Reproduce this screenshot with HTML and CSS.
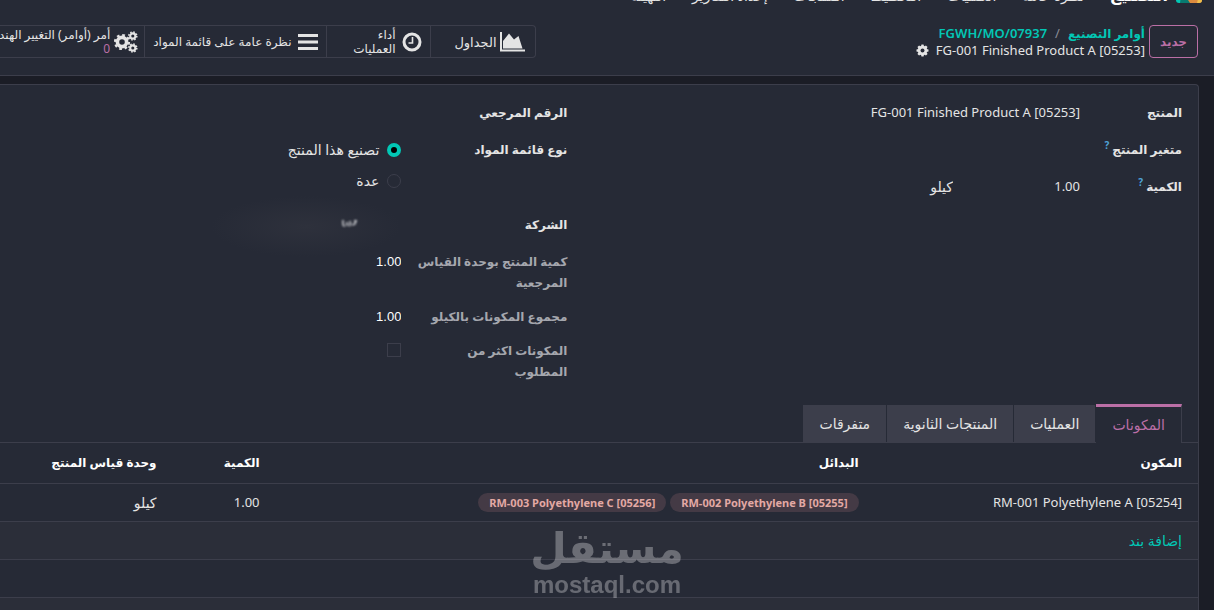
FILE: index.html
```html
<!DOCTYPE html>
<html lang="ar" dir="rtl">

<head>
    <meta charset="UTF-8">
    <meta name="viewport" content="width=device-width, initial-scale=1.0">
    <title>أوامر التصنيع</title>
    <link rel="stylesheet" href="styles.css">
</head>

<body>
    <nav class="navbar">
        <svg class="app-icon" viewBox="0 0 26 26" aria-hidden="true">
            <path d="M0 0h10l-2 26H0z" fill="#02c7b5" />
            <path d="M8 0h9v26H4z" fill="#087a70" />
            <path d="M14 26l-2-3 5-23h9v26z" fill="#dc8b3f" />
            <path d="M21 26l2-8h3v8z" fill="#f0bf4c" />
        </svg>
        <a class="brand" href="#">التصنيع</a>
        <a href="#">نظرة عامة</a>
        <a href="#">العمليات</a>
        <a href="#">التخطيط</a>
        <a href="#">المنتجات</a>
        <a href="#">إعداد التقارير</a>
        <a href="#">التهيئة</a>
    </nav>

    <header class="control-panel">
        <div class="cp-main">
            <button class="btn-new" type="button">جديد</button>
            <div class="crumbs">
                <div class="crumb-links">
                    <a class="crumb-ar" href="#">أوامر التصنيع</a>
                    <span class="slash">/</span>
                    <a href="#">FGWH/MO/07937</a>
                </div>
                <div class="crumb-current">
                    <span>[05253] FG-001 Finished Product A</span>
                    <button class="gear" type="button" aria-label="الإجراءات">
                        <svg viewBox="0 0 16 16">
                            <g fill="currentColor">
                                <circle cx="8" cy="8" r="5.9" />
                                <rect x="6.4" y="0.6" width="3.2" height="14.8" rx="0.6" />
                                <rect x="6.4" y="0.6" width="3.2" height="14.8" rx="0.6" transform="rotate(45 8 8)" />
                                <rect x="6.4" y="0.6" width="3.2" height="14.8" rx="0.6" transform="rotate(90 8 8)" />
                                <rect x="6.4" y="0.6" width="3.2" height="14.8" rx="0.6" transform="rotate(135 8 8)" />
                            </g>
                            <circle cx="8" cy="8" r="2.4" fill="#262a36" />
                        </svg>
                    </button>
                </div>
            </div>
        </div>

        <div class="stats">
            <button class="stat stat-chart" type="button">
                <svg class="icon-chart" viewBox="0 0 25 20">
                    <path d="M1 0v18.5h24" fill="none" stroke="currentColor" stroke-width="2" />
                    <path d="M3 16.500V9l6-7.500 5 6 4.500-3.500 4 12.500z" fill="currentColor" />
                </svg>
                <span>الجداول</span>
            </button>
            <button class="stat stat-narrow" type="button">
                <svg class="icon" viewBox="0 0 20 20">
                    <circle cx="10" cy="10" r="8" fill="none" stroke="currentColor" stroke-width="3" />
                    <path d="M10.500 5v6H6.500" fill="none" stroke="currentColor" stroke-width="1.600" />
                </svg>
                <span>أداء العمليات</span>
            </button>
            <button class="stat stat-list" type="button">
                <svg class="icon" viewBox="0 0 20 20">
                    <path d="M0 3.500h20M0 10h20M0 16.500h20" stroke="currentColor" stroke-width="3" />
                </svg>
                <span>نظرة عامة على قائمة المواد</span>
            </button>
            <button class="stat stat-eco" type="button">
                <svg class="icon-gears" viewBox="0 0 24 22">
                    <g fill="none" stroke="currentColor">
                        <circle cx="8" cy="11" r="4.600" stroke-width="3.600" />
                        <circle cx="8" cy="11" r="6.900" stroke-width="2.400" stroke-dasharray="2.700 2.720" />
                        <circle cx="18.800" cy="5" r="2.600" stroke-width="2.100" />
                        <circle cx="18.800" cy="5" r="4" stroke-width="1.500" stroke-dasharray="1.570 1.570" />
                        <circle cx="18.800" cy="17" r="2.600" stroke-width="2.100" />
                        <circle cx="18.800" cy="17" r="4" stroke-width="1.500" stroke-dasharray="1.570 1.570" />
                    </g>
                </svg>
                <span>أمر (أوامر) التغيير الهندسي<b>0</b></span>
            </button>
        </div>
    </header>

    <main class="sheet">
        <form class="form">
            <div class="group group-main">
                <div class="row">
                    <label for="product">المنتج</label>
                    <input id="product" type="text" value="[05253] FG-001 Finished Product A">
                </div>
                <div class="row">
                    <span class="label">متغير المنتج <sup>?</sup></span>
                </div>
                <div class="row row-qty">
                    <label for="qty">الكمية <sup>?</sup></label>
                    <input id="qty" type="text" value="1.00">
                    <input class="ar" type="text" value="كيلو" aria-label="وحدة القياس">
                </div>
            </div>

            <div class="group group-side">
                <div class="row">
                    <span class="label">الرقم المرجعي</span>
                </div>
                <div class="row">
                    <span class="label">نوع قائمة المواد</span>
                    <div class="radios ar">
                        <label><input type="radio" name="type" checked>تصنيع هذا المنتج</label>
                        <label><input type="radio" name="type">عدة</label>
                    </div>
                </div>
                <div class="row">
                    <span class="label">الشركة</span>
                    <div class="company">
                        <svg class="smudge" viewBox="0 0 18 12" aria-hidden="true">
                            <path d="M2 3v4q0 2 2 2M6 5v4M9 4q1 4-1 5M11 8l3-1 1-4M13 4h3" fill="none" stroke="#d0d1d5" stroke-width="1.500" />
                        </svg>
                    </div>
                </div>
                <div class="row muted">
                    <label for="ref-qty">كمية المنتج بوحدة القياس المرجعية</label>
                    <input class="num" id="ref-qty" type="text" value="1.00">
                </div>
                <div class="row muted tight">
                    <label for="total">مجموع المكونات بالكيلو</label>
                    <input class="num" id="total" type="text" value="1.00">
                </div>
                <div class="row muted tight">
                    <label for="over">المكونات اكثر من المطلوب</label>
                    <input id="over" type="checkbox">
                </div>
            </div>
        </form>

        <div class="tabs">
            <button class="tab active" type="button">المكونات</button>
            <button class="tab" type="button">العمليات</button>
            <button class="tab" type="button">المنتجات الثانوية</button>
            <button class="tab" type="button">متفرقات</button>
        </div>

        <table class="lines">
            <thead>
                <tr>
                    <th class="col-name">المكون</th>
                    <th class="col-alt">البدائل</th>
                    <th class="col-qty">الكمية</th>
                    <th>وحدة قياس المنتج</th>
                </tr>
            </thead>
            <tbody>
                <tr>
                    <td>[05254] RM-001 Polyethylene A</td>
                    <td>
                        <div class="tags">
                            <span class="tag">[05255] RM-002 Polyethylene B</span>
                            <span class="tag">[05256] RM-003 Polyethylene C</span>
                        </div>
                    </td>
                    <td>1.00</td>
                    <td class="ar">كيلو</td>
                </tr>
                <tr>
                    <td class="ar" colspan="4"><a href="#">إضافة بند</a></td>
                </tr>
                <tr>
                    <td colspan="4"></td>
                </tr>
                <tr>
                    <td colspan="4"></td>
                </tr>
            </tbody>
        </table>
    </main>

    <div class="watermark">
        <span class="wm-ar">مستقل</span>
        <span class="wm-en">mostaql.com</span>
    </div>
</body>

</html>
```
FILE: styles.css
```css
* {
    box-sizing: border-box;
    margin: 0;
    padding: 0;
}

html,
body {
    height: 100%;
}

body {
    display: flex;
    flex-direction: column;
    overflow: hidden;
    background-color: #1b1d26;
    color: #e4e4e4;
    font-family: "Noto Sans", "DejaVu Sans", sans-serif;
    font-size: 13px;
    line-height: 21px;
}

button,
input {
    border: 0;
    background: none;
    color: inherit;
    font: inherit;
}

a {
    color: #02c7b5;
    text-decoration: none;
}

.ar {
    font-size: 14px;
}

/* navbar */
.navbar {
    display: flex;
    flex: 0 0 6px;
    align-items: flex-end;
    gap: 26px;
    overflow: hidden;
    padding: 0 12px;
    background-color: #262a36;
}

.navbar a {
    color: #e4e4e4;
    font-size: 14px;
}

.navbar .brand {
    color: #fff;
    font-size: 16px;
    font-weight: bold;
}

.app-icon {
    flex: none;
    width: 26px;
    height: 26px;
    margin-bottom: 3px;
    margin-left: -18px;
    border-radius: 0 0 3px 3px;
}

/* control panel */
.control-panel {
    display: flex;
    flex: 0 0 70px;
    align-items: flex-start;
    padding: 19px 16px 0 0;
    border-bottom: 1px solid #3c3e4b;
    background-color: #262a36;
}

.cp-main {
    display: flex;
    flex: 0 0 55.3%;
    gap: 4px;
}

.btn-new {
    height: 33px;
    padding: 0 10px;
    border: 1px solid #bb6fa6;
    border-radius: 4px;
    color: #bb6fa6;
    font-size: 12px;
    font-weight: bold;
}

.crumbs {
    line-height: 17px;
}

.crumb-links {
    display: flex;
    gap: 8px;
    font-weight: 600;
}

.crumb-ar {
    font-size: 12px;
}

.slash {
    color: #8b8d96;
    font-weight: normal;
}

.crumb-current {
    display: flex;
    align-items: center;
    gap: 7px;
}

.gear svg {
    display: block;
    width: 13px;
    height: 13px;
}

.stats {
    display: flex;
    flex: 1;
    height: 33px;
    border: 1px solid #3c3e4b;
    border-left: 0;
    border-radius: 0 4px 4px 0;
}

.stat {
    display: flex;
    flex: none;
    align-items: center;
    gap: 6px;
    padding: 0 8px;
    font-size: 12px;
    line-height: 14px;
    text-align: right;
    white-space: nowrap;
}

.stat + .stat {
    border-right: 1px solid #3c3e4b;
}

.stat-chart {
    gap: 3px;
    width: 104px;
    padding-right: 10px;
    font-size: 13px;
}

.stat-narrow {
    width: 104px;
    white-space: normal;
}

.stat-eco {
    gap: 4px;
    padding-right: 6px;
}

.stat svg {
    flex: none;
}

.stat b {
    display: block;
    color: #bb6fa6;
    font-weight: normal;
}

.icon {
    width: 20px;
    height: 20px;
}

.icon-chart {
    width: 25px;
    height: 20px;
}

.icon-gears {
    width: 24px;
    height: 22px;
}

/* sheet */
.sheet {
    flex: 1 0 auto;
    margin: 8px 15px 0 0;
    border: 1px solid #3c3e4b;
    border-width: 1px 1px 0 0;
    border-radius: 0 4px 0 0;
    background-color: #262a36;
}

.form {
    display: grid;
    grid-template-columns: 52% 48%;
    min-height: 319px;
    padding: 17px 16px 0 0;
}

.group {
    display: flex;
    flex-direction: column;
    gap: 16px;
}

.row {
    display: grid;
    grid-template-columns: 102px 1fr;
    min-height: 21px;
}

.row-qty {
    grid-template-columns: 102px 127px 1fr;
}

.group-side .row {
    grid-template-columns: 150px 1fr;
    column-gap: 16px;
}

.row > label,
.label {
    font-size: 12px;
    font-weight: bold;
}

.row input[type="text"] {
    width: 100%;
    height: 21px;
}

.row .num {
    color: #fff;
    font-family: "Liberation Sans", sans-serif;
}

.muted > label {
    color: #a5a7ae;
}

.tight {
    margin-top: -3px;
}

sup {
    color: #4fa3d8;
    font-size: 10px;
    line-height: 1;
}

.radios {
    display: flex;
    flex-direction: column;
    gap: 10px;
    padding-bottom: 7px;
}

.radios label {
    display: flex;
    align-items: center;
    gap: 8px;
}

input[type="radio"],
input[type="checkbox"] {
    width: 14px;
    height: 14px;
    border: 1px solid #3c3e4b;
    appearance: none;
}

input[type="radio"] {
    border-radius: 50%;
}

input[type="radio"]:checked {
    border: 4px solid #02c7b5;
    background-color: #000;
}

input[type="checkbox"] {
    margin-top: 3px;
}

.company {
    position: relative;
    width: 190px;
    padding: 3px 42px 0 0;
}

.company::before {
    content: "";
    position: absolute;
    inset: -18px 0 -22px 0;
    background: radial-gradient(closest-side, #2e313c, #262a36);
}

.smudge {
    position: relative;
    display: block;
    width: 18px;
    height: 12px;
    filter: blur(1px);
}

/* tabs */
.tabs {
    display: flex;
    align-items: flex-end;
    gap: 1px;
    padding-right: 16px;
    border-bottom: 1px solid #3c3e4b;
}

.tab {
    height: 37px;
    padding: 0 16px;
    background-color: #3c3e4b;
    font-size: 14px;
}

.tab.active {
    height: 39px;
    margin-bottom: -1px;
    padding-bottom: 2px;
    border-top: 3px solid #bb6fa6;
    border-right: 1px solid #3c3e4b;
    background-color: #262a36;
    color: #bb6fa6;
}

/* lines */
.lines {
    width: 100%;
    border-collapse: collapse;
    table-layout: fixed;
}

.lines th,
.lines td {
    height: 38px;
    padding: 0 16px 0 0;
    border-bottom: 1px solid #3c3e4b;
    text-align: right;
}

.lines th {
    height: 40px;
    color: #fff;
    font-size: 12px;
}

.lines tbody tr:nth-child(even) {
    background-color: #2b2e39;
}

.col-name {
    width: 27%;
}

.col-alt {
    width: 50%;
}

.col-qty {
    width: 103px;
}

.tags {
    display: flex;
    gap: 4px;
}

.tag {
    padding: 0 11px;
    border-radius: 10px;
    background-color: #443a45;
    color: #e3a9a4;
    font-size: 11px;
    font-weight: bold;
    line-height: 19px;
}

/* watermark */
.watermark {
    position: absolute;
    bottom: 12px;
    left: 0;
    right: 0;
    display: flex;
    flex-direction: column;
    align-items: center;
    color: #fff;
    font-weight: bold;
    opacity: 0.3;
    pointer-events: none;
}

.wm-ar {
    font-family: "DejaVu Sans", sans-serif;
    font-size: 42px;
    line-height: 46px;
}

.wm-en {
    font-family: "Liberation Sans", sans-serif;
    font-size: 24px;
    line-height: 26px;
}
```
